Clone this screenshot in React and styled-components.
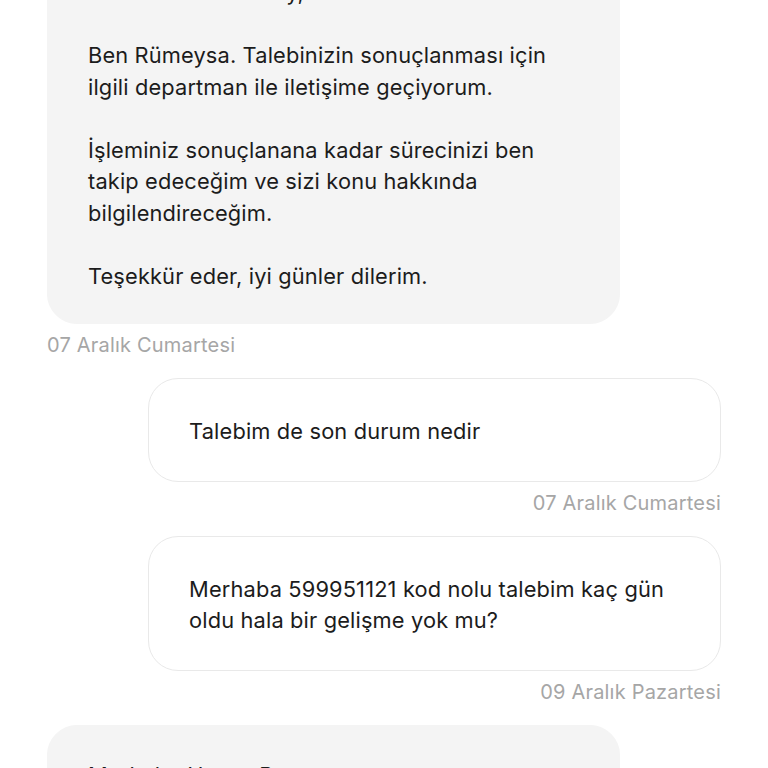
import React from 'react';
import styled, { createGlobalStyle } from 'styled-components';

const GlobalStyle = createGlobalStyle`
  html, body {
    margin: 0;
    padding: 0;
    background: #ffffff;
  }
  body {
    font-family: Inter, "Noto Sans", "Liberation Sans", sans-serif;
    overflow: hidden;
  }
`;

const Viewport = styled.div`
  height: 768px;
  overflow: hidden;
  background: #fff;
`;

const Thread = styled.div`
  display: flex;
  flex-direction: column;
  padding: 0 47px;
  /* chat is scrolled, the first bubble starts above the fold */
  margin-top: -58px;
`;

const Group = styled.div`
  display: flex;
  flex-direction: column;
  align-items: ${p => (p.mine ? 'flex-end' : 'flex-start')};
  margin-bottom: 22px;
`;

const Bubble = styled.div`
  box-sizing: border-box;
  width: 85%;
  padding: ${p => (p.mine ? '37px 40px 33px' : '34px 40px 31px')};
  border-radius: 30px;
  background: ${p => (p.mine ? '#ffffff' : '#f4f4f4')};
  border: 1px solid ${p => (p.mine ? '#e9e9e9' : '#f4f4f4')};
  color: #1c1c1c;
  font-size: 21.8px;
  line-height: 31.5px;
  letter-spacing: 0.15px;
`;

const Para = styled.p`
  margin: 0 0 31.5px;
  &:last-child {
    margin-bottom: 0;
  }
`;

const Stamp = styled.div`
  margin-top: 10px;
  font-size: 20px;
  line-height: 22px;
  letter-spacing: 0.2px;
  color: #a6a6a6;
`;

const messages = [
  {
    mine: false,
    date: '07 Aralık Cumartesi',
    paras: [
      'Merhaba Hasan Bey,',
      'Ben Rümeysa. Talebinizin sonuçlanması için ilgili departman ile iletişime geçiyorum.',
      'İşleminiz sonuçlanana kadar sürecinizi ben takip edeceğim ve sizi konu hakkında bilgilendireceğim.',
      'Teşekkür eder, iyi günler dilerim.',
    ],
  },
  {
    mine: true,
    date: '07 Aralık Cumartesi',
    paras: ['Talebim de son durum nedir'],
  },
  {
    mine: true,
    date: '09 Aralık Pazartesi',
    paras: ['Merhaba 599951121 kod nolu talebim kaç gün oldu hala bir gelişme yok mu?'],
  },
  {
    mine: false,
    date: '09 Aralık Pazartesi',
    paras: [
      'Merhaba Hasan Bey,',
      'Talebiniz ilgili departmana iletilmiştir, en kısa sürede dönüş sağlanacaktır.',
    ],
  },
];

const App = () => {
  return (
    <Viewport>
      <GlobalStyle />
      <Thread>
        {messages.map((m, i) => (
          <Group key={i} mine={m.mine}>
            <Bubble mine={m.mine}>
              {m.paras.map((t, j) => (
                <Para key={j}>{t}</Para>
              ))}
            </Bubble>
            <Stamp>{m.date}</Stamp>
          </Group>
        ))}
      </Thread>
    </Viewport>
  );
};

export default App;
